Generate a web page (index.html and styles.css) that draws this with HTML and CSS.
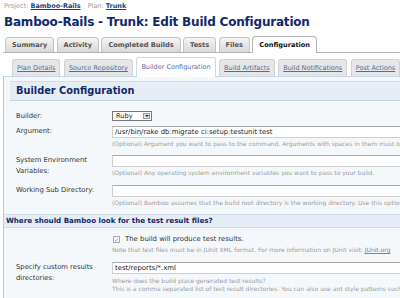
FILE: index.html
```html
<!DOCTYPE html>
<html lang="en">
<head>
    <meta charset="UTF-8">
    <title>Bamboo-Rails - Trunk: Edit Build Configuration</title>
    <link rel="stylesheet" href="styles.css">
</head>
<body>
    <div class="crumbs">
        Project: <a href="#">Bamboo-Rails</a> <span class="sep">Plan:</span> <a href="#">Trunk</a>
    </div>
    <h1>Bamboo-Rails - Trunk: Edit Build Configuration</h1>

    <ul class="tabs">
        <li>Summary</li>
        <li>Activity</li>
        <li>Completed Builds</li>
        <li>Tests</li>
        <li>Files</li>
        <li class="active">Configuration</li>
    </ul>

    <ul class="subtabs">
        <li><a href="#">Plan Details</a></li>
        <li><a href="#">Source Repository</a></li>
        <li class="active">Builder Configuration</li>
        <li><a href="#">Build Artifacts</a></li>
        <li><a href="#">Build Notifications</a></li>
        <li><a href="#">Post Actions</a></li>
    </ul>

    <div class="panel">
        <h2 class="section-title">Builder Configuration</h2>

        <div class="row row-builder">
            <label>Builder:</label>
            <div class="field">
                <div class="select">Ruby <span class="arrow"></span></div>
            </div>
        </div>

        <div class="row row-tight">
            <label>Argument:</label>
            <div class="field">
                <div class="input">/usr/bin/rake db:migrate ci:setup:testunit test</div>
                <p class="hint">(Optional) Argument you want to pass to the command. Arguments with spaces in them must be quoted.</p>
            </div>
        </div>

        <div class="row">
            <label>System Environment Variables:</label>
            <div class="field">
                <div class="input"></div>
                <p class="hint">(Optional) Any operating system environment variables you want to pass to your build.</p>
            </div>
        </div>

        <div class="row row-tight">
            <label>Working Sub Directory:</label>
            <div class="field">
                <div class="input"></div>
                <p class="hint">(Optional) Bamboo assumes that the build root directory is the working directory. Use this option to specify a sub directory.</p>
            </div>
        </div>

        <h3 class="sub-title">Where should Bamboo look for the test result files?</h3>

        <div class="row">
            <label></label>
            <div class="field">
                <div class="check"><span class="box">&#10003;</span>The build will produce test results.</div>
                <p class="hint">Note that test files must be in JUnit XML format. For more information on JUnit visit: <a href="#">JUnit.org</a></p>
            </div>
        </div>

        <div class="row">
            <label>Specify custom results directories:</label>
            <div class="field">
                <div class="input">test/reports/*.xml</div>
                <p class="hint multi">Where does the build place generated test results?<br>This is a comma separated list of test result directories. You can also use ant style patterns such as **/test-reports/*.xml</p>
            </div>
        </div>
    </div>
</body>
</html>
```

FILE: styles.css
```css
* {
    margin: 0;
    padding: 0;
    box-sizing: border-box;
}

html, body {
    overflow: hidden;
}

body {
    font-family: "DejaVu Sans", Verdana, sans-serif;
    background: #fff;
    color: #333;
    padding: 1px 0 0 3px;
    width: 400px;
    height: 298px;
}

a {
    color: #336;
}

.crumbs {
    font-size: 6.5px;
    color: #9a9a9a;
    height: 10px;
    line-height: 10px;
    padding-left: 1px;
}

.crumbs a {
    color: #1d3f7a;
    font-weight: bold;
}

.crumbs .sep {
    margin-left: 5px;
}

h1 {
    font-size: 12px;
    letter-spacing: -0.2px;
    color: #0f2a6b;
    margin-top: 3px;
    height: 17px;
    line-height: 17px;
    padding-left: 1px;
    white-space: nowrap;
}

.tabs {
    list-style: none;
    display: flex;
    align-items: flex-end;
    gap: 2.4px;
    margin-top: 5px;
    padding-left: 2px;
    border-bottom: 1px solid #b4b4b4;
    height: 17px;
    width: 400px;
}

.tabs li {
    font-size: 6.6px;
    font-weight: bold;
    color: #555;
    padding: 0 6px;
    height: 15px;
    line-height: 15px;
    border: 1px solid #c4c4c4;
    border-bottom: none;
    border-radius: 4px 4px 0 0;
    background: linear-gradient(#f5f5f5, #d8d8d8);
    white-space: nowrap;
}

.tabs li.active {
    background: #fff;
    color: #111;
    height: 17px;
    line-height: 16px;
    margin-bottom: -1px;
    border-color: #b4b4b4;
}

.subtabs {
    list-style: none;
    display: flex;
    align-items: flex-end;
    gap: 3.5px;
    margin-top: 4px;
    padding-left: 9px;
    height: 19px;
    width: 400px;
    white-space: nowrap;
}

.subtabs li {
    font-size: 6.5px;
    height: 17px;
    line-height: 16px;
    padding: 0 4px;
    border: 1px solid #d2d2d2;
    border-bottom: none;
    border-radius: 3px 3px 0 0;
    background: #e6e6e6;
}

.subtabs li a {
    color: #4f6fa3;
}

.subtabs li.active {
    background: #fff;
    color: #4f6fa3;
    height: 20px;
    line-height: 19px;
    margin-bottom: -1px;
    border-color: #c8d8ea;
}

.panel {
    background: #f5f8fb;
    border-top: 1px solid #c8d8ea;
    border-left: 1px solid #c8c8c8;
    padding: 4px 0 20px 6px;
    width: 400px;
    height: 240px;
}

.section-title {
    font-size: 9.8px;
    color: #0f2a6b;
    background: #e7edf5;
    border-top: 1px solid #cfdcea;
    border-bottom: 1px solid #c3d2e4;
    height: 20px;
    line-height: 18px;
    padding-left: 6px;
    margin-bottom: 10px;
}

.row {
    display: flex;
    align-items: flex-start;
    padding-left: 6px;
    margin-bottom: 8px;
}

.row-builder {
    margin-bottom: 5px;
}

.row-tight {
    margin-bottom: 7px;
}

.row label {
    width: 96px;
    flex-shrink: 0;
    font-size: 6.8px;
    line-height: 11px;
    color: #333;
    padding-right: 8px;
}

.row-builder label {
    line-height: 10px;
}

.field {
    flex: 1;
    min-width: 0;
    white-space: nowrap;
    overflow: hidden;
}

.select {
    display: flex;
    align-items: center;
    justify-content: space-between;
    width: 40px;
    height: 10px;
    border: 1px solid #777;
    background: #fff;
    font-size: 6.6px;
    line-height: 8px;
    padding: 0 1px 0 3px;
    color: #222;
}

.select .arrow {
    width: 7px;
    height: 6px;
    background: #e6e6e6;
    border: 1px solid #999;
    position: relative;
}

.select .arrow::after {
    content: "";
    position: absolute;
    left: 1px;
    top: 1px;
    border-left: 2px solid transparent;
    border-right: 2px solid transparent;
    border-top: 2px solid #222;
}

.input {
    height: 12px;
    line-height: 10px;
    background: #fff;
    border: 1px solid #cfcfcf;
    border-top-color: #a9a9a9;
    font-size: 6.9px;
    color: #222;
    padding-left: 2px;
}

.hint {
    font-size: 6px;
    color: #9c9c9c;
    line-height: 8px;
    margin-top: 2px;
}

.hint.multi {
    line-height: 7.5px;
    margin-top: 3px;
}

.hint a {
    color: #6b86b6;
}

.sub-title {
    font-size: 7.1px;
    color: #0f2a6b;
    background: #e7edf5;
    border-top: 1px solid #cfdcea;
    border-bottom: 1px solid #cfdcea;
    height: 14px;
    line-height: 12px;
    margin: 0 0 6px -6px;
    padding-left: 2px;
}

.check {
    font-size: 6.9px;
    color: #333;
    line-height: 10px;
    display: flex;
    align-items: center;
}

.check .box {
    display: inline-block;
    width: 7px;
    height: 7px;
    border: 1px solid #aaa;
    background: #f8f8f8;
    font-size: 6px;
    line-height: 5px;
    text-align: center;
    color: #999;
    margin: 0 5px 0 1px;
}
```
